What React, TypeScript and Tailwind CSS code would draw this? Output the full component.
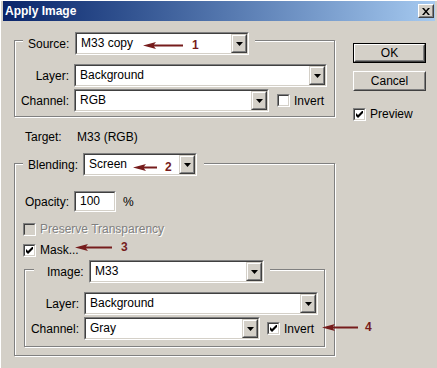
import React from "react";

const FACE = "bg-[#d4d0c8]";

function Select({ value, className }: { value: string; className: string }) {
  return (
    <div className={`h-[23px] shrink-0 border border-t-[#808080] border-l-[#808080] border-r-white border-b-white ${className}`}>
      <div className="flex h-full border border-t-[#404040] border-l-[#404040] border-r-[#d4d0c8] border-b-[#d4d0c8] bg-white">
        <span className="flex-1 pl-[4px] leading-[19px] text-black whitespace-nowrap">{value}</span>
        <div className="h-full w-[16px] border border-t-[#d4d0c8] border-l-[#d4d0c8] border-r-[#404040] border-b-[#404040] bg-[#d4d0c8]">
          <div className="flex h-full items-center justify-center border border-t-white border-l-white border-r-[#808080] border-b-[#808080]">
            <svg width="7" height="4" viewBox="0 0 7 4">
              <path d="M0 0h7L3.5 4z" fill="#000" />
            </svg>
          </div>
        </div>
      </div>
    </div>
  );
}

function Check({ checked, disabled }: { checked?: boolean; disabled?: boolean }) {
  return (
    <div className="h-[13px] w-[13px] shrink-0 border border-t-[#808080] border-l-[#808080] border-r-white border-b-white">
      <div
        className={`flex h-full w-full items-center justify-center border border-t-[#404040] border-l-[#404040] border-r-[#d4d0c8] border-b-[#d4d0c8] ${
          disabled ? "bg-[#d4d0c8]" : "bg-white"
        }`}
      >
        {checked && (
          <svg width="7" height="7" viewBox="0 0 7 7">
            <path d="M0 2L2 4L6 0H7V2L2 7L0 5Z" fill="#000" />
          </svg>
        )}
      </div>
    </div>
  );
}

function Btn({ label, isDefault }: { label: string; isDefault?: boolean }) {
  return (
    <div className={`h-[20px] w-[73px] ${isDefault ? "border border-black" : ""}`}>
      <div className="h-full border border-t-white border-l-white border-r-[#404040] border-b-[#404040]">
        <div className="flex h-full items-center justify-center border border-t-[#d4d0c8] border-l-[#d4d0c8] border-r-[#808080] border-b-[#808080]">
          {label}
        </div>
      </div>
    </div>
  );
}

function Group({
  header,
  headerClass,
  className,
  children,
}: {
  header: React.ReactNode;
  headerClass: string;
  className: string;
  children: React.ReactNode;
}) {
  return (
    <div className={`border border-[#808080] shadow-[inset_1px_1px_0_#fff,1px_1px_0_#fff] ${className}`}>
      <div className={`flex w-fit items-center ${FACE} ${headerClass}`}>{header}</div>
      {children}
    </div>
  );
}

function Arrow({ className, len, n, gap }: { className: string; len: number; n: string; gap: string }) {
  return (
    <div className={`absolute flex h-[14px] items-center ${className}`}>
      <svg width={len} height="9" viewBox={`0 0 ${len} 9`}>
        <path d={`M0 4.5L13 1L11 3.5H${len}V5.5H11L13 8Z`} fill="#761c1c" />
      </svg>
      <span className={`font-bold text-[#761c1c] ${gap}`}>{n}</span>
    </div>
  );
}

export default function App() {
  return (
    <div className="relative flex h-[368px] w-[437px] flex-col overflow-hidden bg-[#d4d0c8] pl-[3px] pr-[2px] pt-[1px] font-['Liberation_Sans',Arial,sans-serif] text-[12px] leading-[14px] text-black shadow-[inset_1px_1px_0_#fff]">
      {/* title bar */}
      <div className="flex h-[20px] items-center justify-between bg-gradient-to-r from-[#0a246a] to-[#a6caf0] pl-[2px] pr-[1px]">
        <span className="font-bold text-white">Apply Image</span>
        <div className="h-[14px] w-[16px] border border-t-white border-l-white border-r-[#404040] border-b-[#404040] bg-[#d4d0c8]">
          <div className="flex h-full items-center justify-center border border-t-[#d4d0c8] border-l-[#d4d0c8] border-r-[#808080] border-b-[#808080]">
            <svg width="8" height="7" viewBox="0 0 8 7">
              <path d="M0 0H2L4 2.5L6 0H8L5 3.5L8 7H6L4 4.5L2 7H0L3 3.5Z" fill="#000" />
            </svg>
          </div>
        </div>
      </div>

      <div className="flex pl-[11px] pt-[19px]">
        {/* left column */}
        <div className="flex w-[321px] flex-col">
          <Group
            className="pb-[4px]"
            headerClass="-mt-[9px] ml-[8px] pl-[5px] pr-[6px]"
            header={
              <>
                <span className="w-[47px]">Source:</span>
                <Select value="M33 copy" className="w-[174px]" />
              </>
            }
          >
            <div className="mt-[9px] flex items-center">
              <span className="w-[54px] text-right">Layer:</span>
              <Select value="Background" className="ml-[5px] w-[253px]" />
            </div>
            <div className="mt-[2px] flex items-center">
              <span className="w-[54px] text-right">Channel:</span>
              <Select value="RGB" className="ml-[5px] w-[195px]" />
              <div className="ml-[8px]">
                <Check />
              </div>
              <span className="ml-[4px]">Invert</span>
            </div>
          </Group>

          <div className="ml-[11px] mt-[13px] flex">
            <span className="w-[52px]">Target:</span>
            <span>M33 (RGB)</span>
          </div>

          <Group
            className="mt-[19px] pb-[8px]"
            headerClass="-mt-[11px] ml-[8px] pl-[5px] pr-[7px]"
            header={
              <>
                <span className="w-[55px]">Blending:</span>
                <Select value="Screen" className="w-[114px]" />
              </>
            }
          >
            <div className="mt-[15px] flex items-center">
              <span className="w-[54px] text-right">Opacity:</span>
              <div className="ml-[5px] h-[21px] w-[42px] border border-t-[#808080] border-l-[#808080] border-r-white border-b-white">
                <div className="h-full border border-t-[#404040] border-l-[#404040] border-r-[#d4d0c8] border-b-[#d4d0c8] bg-white pl-[4px] leading-[17px]">
                  100
                </div>
              </div>
              <span className="ml-[7px]">%</span>
            </div>
            <div className="ml-[8px] mt-[10px] flex items-center">
              <Check disabled />
              <span className="ml-[4px] text-[#808080] [text-shadow:1px_1px_0_#fff]">Preserve Transparency</span>
            </div>
            <div className="ml-[8px] mt-[7px] flex items-center">
              <Check checked />
              <span className="ml-[4px]">Mask...</span>
            </div>

            <Group
              className="ml-[9px] mt-[12px] w-[301px] pb-[6px]"
              headerClass="-mt-[10px] ml-[9px] pl-[13px] pr-[6px]"
              header={
                <>
                  <span className="w-[42px]">Image:</span>
                  <Select value="M33" className="w-[175px]" />
                </>
              }
            >
              <div className="mt-[9px] flex items-center">
                <span className="w-[54px] text-right">Layer:</span>
                <Select value="Background" className="ml-[5px] w-[234px]" />
              </div>
              <div className="mt-[2px] flex items-center">
                <span className="w-[54px] text-right">Channel:</span>
                <Select value="Gray" className="ml-[5px] w-[176px]" />
                <div className="ml-[7px]">
                  <Check checked />
                </div>
                <span className="ml-[4px]">Invert</span>
              </div>
            </Group>
          </Group>
        </div>

        {/* right column */}
        <div className="ml-[18px] mt-[3px] flex flex-col">
          <Btn label="OK" isDefault />
          <div className="mt-[8px]">
            <Btn label="Cancel" />
          </div>
          <div className="mt-[16px] flex items-center">
            <Check checked />
            <span className="ml-[4px]">Preview</span>
          </div>
        </div>
      </div>

      <Arrow className="left-[143px] top-[38px]" len={40} n="1" gap="ml-[9px]" />
      <Arrow className="left-[133px] top-[160px]" len={24} n="2" gap="ml-[8px]" />
      <Arrow className="left-[75px] top-[240px]" len={37} n="3" gap="ml-[9px]" />
      <Arrow className="left-[322px] top-[320px]" len={36} n="4" gap="ml-[7px]" />
    </div>
  );
}
